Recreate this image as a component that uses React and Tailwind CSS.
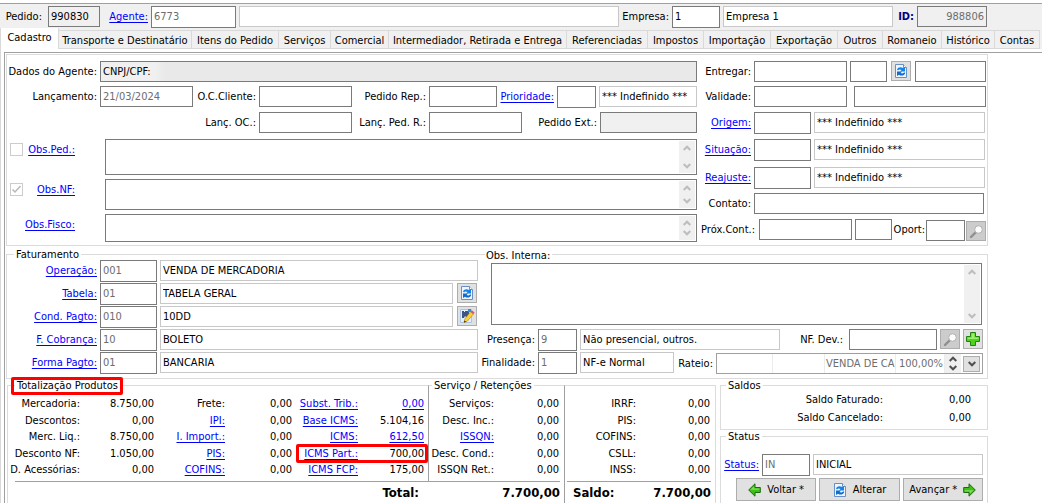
import { useId } from "react";

const tabs = [
    { label: "Cadastro", width: "w-[59px]" },
    { label: "Transporte e Destinatário", width: "w-[133px]" },
    { label: "Itens do Pedido", width: "w-[87px]" },
    { label: "Serviços", width: "w-[52px]" },
    { label: "Comercial", width: "w-[58px]" },
    { label: "Intermediador, Retirada e Entrega", width: "w-[178px]" },
    { label: "Referenciadas", width: "w-[81px]" },
    { label: "Impostos", width: "w-[56px]" },
    { label: "Importação", width: "w-[67px]" },
    { label: "Exportação", width: "w-[67px]" },
    { label: "Outros", width: "w-[45px]" },
    { label: "Romaneio", width: "w-[59px]" },
    { label: "Histórico", width: "w-[53px]" },
    { label: "Contas", width: "w-[45px]" },
];

const produtos = [
    [
        { label: "Mercadoria:", value: "8.750,00" },
        { label: "Descontos:", value: "0,00" },
        { label: "Merc. Liq.:", value: "8.750,00" },
        { label: "Desconto NF:", value: "1.050,00" },
        { label: "D. Acessórias:", value: "0,00" },
    ],
    [
        { label: "Frete:", value: "0,00" },
        { label: "IPI:", value: "0,00", link: true },
        { label: "I. Import.:", value: "0,00", link: true },
        { label: "PIS:", value: "0,00", link: true },
        { label: "COFINS:", value: "0,00", link: true },
    ],
    [
        { label: "Subst. Trib.:", value: "0,00", link: true, valueLink: true },
        { label: "Base ICMS:", value: "5.104,16", link: true },
        { label: "ICMS:", value: "612,50", link: true, valueLink: true },
        { label: "ICMS Part.:", value: "700,00", link: true, marked: true },
        { label: "ICMS FCP:", value: "175,00", link: true },
    ],
];

const servicos = [
    { label: "Serviços:", value: "0,00" },
    { label: "Desc. Inc.:", value: "0,00" },
    { label: "ISSQN:", value: "0,00", link: true },
    { label: "Desc. Cond.:", value: "0,00" },
    { label: "ISSQN Ret.:", value: "0,00" },
];

const retencoes = [
    { label: "IRRF:", value: "0,00" },
    { label: "PIS:", value: "0,00" },
    { label: "COFINS:", value: "0,00" },
    { label: "CSLL:", value: "0,00" },
    { label: "INSS:", value: "0,00" },
];

const faturamento = [
    { label: "Operação:", code: "001", name: "VENDA DE MERCADORIA" },
    { label: "Tabela:", code: "01", name: "TABELA GERAL", icon: "refresh" },
    { label: "Cond. Pagto:", code: "010", name: "10DD", icon: "edit" },
    { label: "F. Cobrança:", code: "10", name: "BOLETO" },
    { label: "Forma Pagto:", code: "01", name: "BANCARIA" },
];

/* ---------- Iconos ---------- */

const RefreshIcon = () => (
    <svg width="14" height="16" viewBox="0 0 14 16" aria-hidden="true">
        <path d="M1.5 1.5h8l3 3v10h-11z" fill="#eef5fd" stroke="#6a8fc4" />
        <path d="M9.5 1.5v3h3" fill="#fff" stroke="#6a8fc4" />
        <path d="M3 6.500C4 4 7 3.500 9 5l2-1v4.500H6l1.600-1.500C6.200 6.200 4.800 6.300 4 7.500z" fill="#1583e6" />
        <path d="M11.200 10c-1 2.800-4.200 3.300-6.200 1.700L3 13V8.500h5L6.500 10c1.400.8 2.800.6 3.700-.8z" fill="#0f6bd0" />
    </svg>
);

const EditIcon = () => (
    <svg width="16" height="16" viewBox="0 0 16 16" aria-hidden="true">
        <path d="M1.500 1.500h11v13h-11z" fill="#e3effb" stroke="#a9c6ea" />
        <path d="M3 3h2v1h1V3h4v6l-2 1-2-2-1 2H3z" fill="#3f5486" />
        <path d="M9 1h3v3H9z" fill="#3b8ad8" />
        <path d="M5 14.500l.8-3.500L11.500 3.800l2.800 2.400L8 13.500z" fill="#fbd13c" stroke="#b07a12" strokeWidth=".6" />
        <path d="M11.500 3.800l1.300-1.600 2.800 2.400-1.300 1.600z" fill="#d8558a" />
        <path d="M5 14.500l.5-2 1.500 1.300z" fill="#222" />
    </svg>
);

const SearchIcon = () => (
    <svg width="15" height="15" viewBox="0 0 15 15" aria-hidden="true">
        <path d="M2 13L6.500 8.500" stroke="#8f8f8f" strokeWidth="2.400" strokeLinecap="round" />
        <circle cx="9.500" cy="5.500" r="3.800" fill="#fcfcfc" stroke="#b0b0b0" />
    </svg>
);

const PlusIcon = () => (
    <svg width="16" height="16" viewBox="0 0 16 16" aria-hidden="true">
        <path d="M5.500 1.500h5v4h4v5h-4v4h-5v-4h-4v-5h4z" fill="#4fd321" stroke="#23820f" />
        <path d="M6.500 2.500h3v4h4v1.500h-11V6.500h4z" fill="#9cf06c" />
    </svg>
);

const ArrowIcon = ({ flip }) => (
    <svg width="13" height="14" viewBox="0 0 13 14" className={flip ? "rotate-180" : ""} aria-hidden="true">
        <path d="M.7 7L7 .8v3.700h5.300v5H7v3.700z" fill="#3fbf17" stroke="#1c6b12" />
        <path d="M2.500 6.800L6.100 3.200v2.200h5.200v1.400z" fill="#7fe055" />
    </svg>
);

const Chevron = ({ down, color = "#bdbdbd" }) => (
    <svg width="8" height="6" viewBox="0 0 8 6" className={down ? "rotate-180" : ""} aria-hidden="true">
        <path d="M.7 5L4 1.700 7.300 5" fill="none" stroke={color} strokeWidth="2" />
    </svg>
);

/* ---------- Controles ---------- */

const linkClass = "text-[#0000ff] underline underline-offset-2 decoration-1";

const Input = ({ className = "", soft, ...props }) => (
    <input
        className={`min-w-0 border px-0.5 pb-px outline-none rounded-none ${soft ? "border-[#c8c8c8]" : "border-[#7a7a7a]"} ${className}`}
        {...props}
    />
);

const Field = ({ label, link, labelWidth = "", labelClass = "", className = "", ...props }) => {
    const id = useId();

    return (
        <>
            <span className={`flex justify-end items-center shrink-0 whitespace-nowrap ${labelWidth} ${labelClass}`}>
                {link
                    ? <a href="#" id={`${id}-l`} className={linkClass}>{label}</a>
                    : <label htmlFor={id}>{label}</label>}
            </span>
            <Input id={id} aria-labelledby={link ? `${id}-l` : undefined} className={`shrink-0 ${className}`} {...props} />
        </>
    );
};

const Memo = ({ label, className = "" }) => (
    <div className={`flex border border-[#7a7a7a] p-px ${className}`}>
        <textarea aria-label={label} className="flex-1 min-w-0 resize-none overflow-hidden outline-none px-0.5" />
        <div className="w-4 bg-[#f0f0f0] flex flex-col justify-between items-center py-1">
            <Chevron />
            <Chevron down />
        </div>
    </div>
);

const IconButton = ({ title, className = "bg-[#e1e1e1]", children }) => (
    <button title={title} className={`shrink-0 w-5 h-5 flex items-center justify-center border border-[#adadad] ${className}`}>
        {children}
    </button>
);

const ActionButton = ({ children }) => (
    <button className="flex-1 h-[23px] flex items-center justify-center gap-1.5 bg-[#e1e1e1] border border-[#adadad] whitespace-nowrap">
        {children}
    </button>
);

const Legend = ({ children, className = "" }) => (
    <legend className={`h-3 leading-[14px] px-0.5 whitespace-nowrap ${className}`}>{children}</legend>
);

const Totals = ({ rows, labelWidth, className = "" }) => (
    <dl className={`flex flex-col justify-between h-[82px] leading-4 whitespace-nowrap ${className}`}>
        {rows.map(row => (
            <div key={row.label} className="relative flex h-4">
                <dt className={`flex justify-end shrink-0 ${labelWidth}`}>
                    {row.link ? <a href="#" className={linkClass}>{row.label}</a> : row.label}
                </dt>
                <dd className="flex-1 flex justify-end">
                    {row.valueLink ? <a href="#" className={linkClass}>{row.value}</a> : row.value}
                </dd>
                {row.marked && (
                    <div className="absolute -top-0.5 -bottom-px left-1 -right-1 border-3 border-[#ff0000] rounded-xs" />
                )}
            </div>
        ))}
    </dl>
);

/* ---------- Secciones ---------- */

const Header = () => (
    <div className="flex items-start gap-[3px] pt-0.5 pl-1.5 pr-[55px] border-t border-[#a0a0a0]">
        <Field label="Pedido:" labelWidth="w-9" labelClass="h-[21px] mr-[3px]" className="w-[52px] h-[21px] bg-[#f0f0f0]" defaultValue="990830" />
        <Field label="Agente:" link labelWidth="w-[45px]" labelClass="h-[22px]" className="w-[85px] h-[22px] bg-white text-[#6d6d6d]" defaultValue="6773" />
        <Input soft aria-label="Nome do agente" className="flex-1 h-[21px] bg-white" />
        <Field label="Empresa:" labelWidth="w-[47px]" labelClass="h-[22px]" className="w-12 h-[22px] bg-white" defaultValue="1" />
        <Input soft aria-label="Nome da empresa" className="w-[170px] h-[21px] bg-white" defaultValue="Empresa 1" />
        <Field label="ID:" labelWidth="w-[18px]" labelClass="h-[22px] font-bold text-[#000080]" className="w-[70px] h-[21px] bg-[#f0f0f0] text-right text-[#6d6d6d]" defaultValue="988806" />
    </div>
);

const Cadastro = () => (
    <div className="flex border border-[#dcdcdc] pt-1.5 pb-[3px]">
        <div className="flex-1 min-w-0">
            <div className="flex gap-[3px]">
                <Field
                    label="Dados do Agente:"
                    labelWidth="w-[90px]"
                    className="flex-1 h-[21px] bg-[linear-gradient(90deg,#f0f0f0_54px,#e9e9e9_64px)]"
                    defaultValue="CNPJ/CPF:"
                />
            </div>
            <div className="flex items-start gap-[3px] mt-1">
                <Field label="Lançamento:" labelWidth="w-[90px]" labelClass="h-[22px]" className="w-[93px] h-[21px] text-[#6d6d6d]" defaultValue="21/03/2024" />
                <Field label="O.C.Cliente:" labelWidth="w-[60px]" labelClass="h-[21px]" className="w-[93px] h-[21px]" />
                <Field label="Pedido Rep.:" labelWidth="w-[71px]" labelClass="h-[21px]" className="w-[68px] h-[21px]" />
                <Field label="Prioridade:" link labelWidth="w-[54px]" labelClass="h-[22px]" className="w-[39px] h-[22px]" />
                <Input soft aria-label="Descrição da prioridade" className="flex-1 h-[21px]" defaultValue="*** Indefinido ***" />
            </div>
            <div className="flex gap-[3px] mt-1">
                <Field label="Lanç. OC.:" labelWidth="w-[249px]" className="w-[93px] h-[21px]" />
                <Field label="Lanç. Ped. R.:" labelWidth="w-[71px]" className="w-[93px] h-[21px]" />
                <Field label="Pedido Ext.:" labelWidth="w-[72px]" className="flex-1 h-[21px] bg-[#f0f0f0]" />
            </div>

            <div className="flex items-start gap-[3px] mt-1.5 pl-[3px]">
                <input type="checkbox" aria-label="Obs.Ped." className="appearance-none shrink-0 size-[13px] mt-1 border border-[#cccccc]" />
                <a href="#" className={`w-[49px] leading-[22px] mr-[27px] text-right whitespace-nowrap ${linkClass}`}>Obs.Ped.:</a>
                <Memo label="Obs.Ped." className="flex-1 h-9" />
            </div>
            <div className="flex items-start gap-[3px] mt-1 pl-[3px]">
                <span className="relative shrink-0 size-[13px] mt-1">
                    <input type="checkbox" aria-label="Obs.NF" defaultChecked className="appearance-none block size-[13px] border border-[#cccccc]" />
                    <svg width="13" height="13" viewBox="0 0 13 13" className="absolute inset-0 pointer-events-none" aria-hidden="true">
                        <path d="M2.500 6.500l2.500 2.500 5.500-6" fill="none" stroke="#b8b8b8" strokeWidth="1.500" />
                    </svg>
                </span>
                <a href="#" className={`w-[49px] leading-[22px] mr-[27px] text-right whitespace-nowrap ${linkClass}`}>Obs.NF:</a>
                <Memo label="Obs.NF" className="flex-1 h-[31px]" />
            </div>
            <div className="flex items-start gap-[3px] mt-1 pl-[3px]">
                <a href="#" className={`w-[65px] leading-[22px] mr-[27px] text-right whitespace-nowrap ${linkClass}`}>Obs.Fisco:</a>
                <Memo label="Obs.Fisco" className="flex-1 h-7" />
            </div>
        </div>

        <div className="w-[290px]">
            <div className="flex gap-[3px] pr-px">
                <Field label="Entregar:" labelWidth="w-[54px]" className="w-[93px] h-[21px]" />
                <Input aria-label="Hora da entrega" className="w-[37px] h-[21px]" />
                <span className="mx-px"><IconButton title="Atualizar entrega"><RefreshIcon /></IconButton></span>
                <Input aria-label="Período da entrega" className="flex-1 h-[21px]" />
            </div>
            <div className="flex gap-[3px] pr-px mt-1">
                <Field label="Validade:" labelWidth="w-[54px]" className="w-[93px] h-[21px]" />
                <Input aria-label="Descrição da validade" className="flex-1 h-[21px] ml-1" />
            </div>
            <div className="flex items-start gap-[3px] pr-0.5 mt-[5px]">
                <Field label="Origem:" link labelWidth="w-[54px]" labelClass="h-[22px]" className="w-[57px] h-[22px]" />
                <Input soft aria-label="Descrição da origem" className="flex-1 h-[21px]" defaultValue="*** Indefinido ***" />
            </div>
            <div className="flex items-start gap-[3px] pr-0.5 mt-[5px]">
                <Field label="Situação:" link labelWidth="w-[54px]" labelClass="h-[22px]" className="w-[57px] h-[22px]" />
                <Input soft aria-label="Descrição da situação" className="flex-1 h-[21px]" defaultValue="*** Indefinido ***" />
            </div>
            <div className="flex items-start gap-[3px] pr-0.5 mt-1.5">
                <Field label="Reajuste:" link labelWidth="w-[54px]" labelClass="h-[22px]" className="w-[57px] h-[22px]" />
                <Input soft aria-label="Descrição do reajuste" className="flex-1 h-[21px]" defaultValue="*** Indefinido ***" />
            </div>
            <div className="flex gap-[3px] pr-[3px] mt-1">
                <Field label="Contato:" labelWidth="w-[54px]" className="flex-1 h-[21px]" />
            </div>
            <div className="flex items-end gap-px pr-px mt-[5px]">
                <Field label="Próx.Cont.:" labelWidth="w-[58px]" labelClass="h-[22px] mr-[3px]" className="w-[93px] h-[21px] mb-px" />
                <Input aria-label="Hora do próximo contato" className="w-[37px] h-[21px] ml-0.5 mb-px" />
                <Field label="Oport:" labelWidth="w-8" labelClass="h-[22px]" className="w-[39px] h-[21px]" />
                <IconButton title="Buscar oportunidade" className="bg-[#cccccc]"><SearchIcon /></IconButton>
            </div>
        </div>
    </div>
);

const Faturamento = () => (
    <fieldset className="relative mt-0.5 border border-[#dcdcdc]">
        <Legend className="ml-[7px]">Faturamento</Legend>
        <div className="flex pb-0.5">
            <div className="flex-1 min-w-0 flex flex-col gap-px">
                {faturamento.map(item => (
                    <div key={item.label} className="flex items-start gap-[3px]">
                        <Field label={item.label} link labelWidth="w-[90px]" labelClass="h-[22px]" className="w-[57px] h-[22px] text-[#6d6d6d]" defaultValue={item.code} />
                        <Input soft aria-label={`Descrição ${item.label}`} className="flex-1 h-[21px]" defaultValue={item.name} />
                        {item.icon && (
                            <span className="ml-px mr-px">
                                <IconButton title={item.label}>
                                    {item.icon === "refresh" ? <RefreshIcon /> : <EditIcon />}
                                </IconButton>
                            </span>
                        )}
                    </div>
                ))}
            </div>

            <div className="w-[509px] pl-[3px]">
                <span className="absolute top-0 -mt-[11px] ml-1 bg-white pl-px pr-0.5 leading-[14px]">Obs. Interna:</span>
                <Memo label="Obs. Interna" className="h-[62px] mt-[3px] ml-2.5 mr-[5px]" />
                <div className="flex items-start gap-[3px] mt-1 pr-1">
                    <Field label="Presença:" labelWidth="w-[54px]" labelClass="h-[22px]" className="w-[39px] h-[22px] text-[#6d6d6d]" defaultValue="9" />
                    <Input soft aria-label="Descrição da presença" className="w-[200px] h-[21px]" defaultValue="Não presencial, outros." />
                    <Field label="NF. Dev.:" labelWidth="w-[60px]" labelClass="h-[21px] mr-[3px]" className="flex-1 h-[21px]" />
                    <IconButton title="Buscar NF" className="bg-[#cccccc]"><SearchIcon /></IconButton>
                    <IconButton title="Adicionar NF"><PlusIcon /></IconButton>
                </div>
                <div className="flex items-start gap-[3px] mt-px pr-1">
                    <Field label="Finalidade:" labelWidth="w-[54px]" labelClass="h-[22px]" className="w-[39px] h-[22px] text-[#6d6d6d]" defaultValue="1" />
                    <Input soft aria-label="Descrição da finalidade" className="w-[94px] h-[21px]" defaultValue="NF-e Normal" />
                    <span className="w-9 h-6 flex items-center justify-end whitespace-nowrap">Rateio:</span>
                    <div className="flex-1 h-[21px] mt-px flex items-center border border-[#a0a0a0] text-[#6d6d6d] leading-[19px] whitespace-nowrap">
                        <span className="flex-1 h-full border-r border-[#ececec]" />
                        <span className="w-[52px] h-full border-r border-[#ececec]" />
                        <span className="shrink-0 w-[71px] h-full border-r border-[#ececec] pl-px">VENDA DE CA</span>
                        <span className="shrink-0 w-[49px] h-full border-r border-[#ececec] text-right pr-px">100,00%</span>
                        <span className="w-4 h-full bg-[#f0f0f0] flex flex-col justify-around items-center">
                            <Chevron color="#505050" />
                            <Chevron down color="#505050" />
                        </span>
                        <button title="Abrir rateio" className="w-[17px] h-4 mx-0.5 flex items-center justify-center bg-[#e1e1e1] border border-[#adadad]">
                            <Chevron down color="#505050" />
                        </button>
                    </div>
                </div>
            </div>
        </div>
    </fieldset>
);

const Totalizacao = () => (
    <div className="flex-1 flex ml-px">
        <div className="flex-1 min-w-0 flex flex-col">
            <div className="flex">
                <fieldset className="flex-1 min-w-0 border-t border-l border-[#dcdcdc]">
                    <Legend className="relative ml-[7px]">
                        Totalização Produtos
                        <span className="absolute -left-1 -right-[3px] -top-0.5 -bottom-1 border-3 border-[#ff0000] rounded-xs" />
                    </Legend>
                    <div className="flex pt-[5px] pb-[3px] pr-1">
                        <Totals rows={produtos[0]} labelWidth="w-[72px]" className="flex-1" />
                        <Totals rows={produtos[1]} labelWidth="w-[71px]" className="w-[138px]" />
                        <Totals rows={produtos[2]} labelWidth="w-[66px]" className="w-[132px]" />
                    </div>
                </fieldset>
                <fieldset className="w-[136px] border-t border-[#dcdcdc] border-l border-l-[#a0a0a0]">
                    <Legend className="ml-[3px]">Serviço / Retenções</Legend>
                    <Totals rows={servicos} labelWidth="w-[65px]" className="mt-[5px] mr-[5px]" />
                </fieldset>
            </div>
            <div className="flex-1 flex border-l border-[#dcdcdc] pl-[7px] pr-1">
                <div className="flex-1 flex justify-end border-t border-[#a0a0a0] text-[13px] font-bold leading-[22px]">
                    <span>Total:</span>
                    <span className="w-[141px] text-right">7.700,00</span>
                </div>
            </div>
        </div>
        <div className="w-[152px] mt-1.5 flex flex-col border-t border-x border-[#dcdcdc] border-l-[#a0a0a0]">
            <Totals rows={retencoes} labelWidth="w-[71px]" className="mt-2.5 mb-[3px] mr-[5px]" />
            <div className="ml-0.5 mr-1 pl-1.5 flex justify-between border-t border-[#a0a0a0] text-[13px] font-bold leading-[22px]">
                <span>Saldo:</span>
                <span>7.700,00</span>
            </div>
        </div>
    </div>
);

const Situacao = () => (
    <div className="w-[268px] ml-1 flex flex-col">
        <fieldset className="border border-[#dcdcdc]">
            <Legend className="ml-[5px]">Saldos</Legend>
            <dl className="flex flex-col gap-0.5 pt-px pb-[3px] pr-4 leading-4">
                <div className="flex justify-end">
                    <dt>Saldo Faturado:</dt>
                    <dd className="w-[88px] text-right">0,00</dd>
                </div>
                <div className="flex justify-end">
                    <dt>Saldo Cancelado:</dt>
                    <dd className="w-[88px] text-right">0,00</dd>
                </div>
            </dl>
        </fieldset>
        <fieldset className="flex-1 border border-b-0 border-[#dcdcdc]">
            <Legend className="ml-[5px]">Status</Legend>
            <div className="flex items-start gap-[3px] pt-3 pl-0.5 pr-1">
                <Field label="Status:" link labelWidth="w-9" labelClass="h-[22px]" className="w-12 h-[22px] text-[#6d6d6d]" defaultValue="IN" />
                <Input soft aria-label="Descrição do status" className="flex-1 h-[21px]" defaultValue="INICIAL" />
            </div>
            <div className="flex gap-[3px] mt-0.5 pl-[15px] pr-1">
                <ActionButton><ArrowIcon /> Voltar *</ActionButton>
                <ActionButton><RefreshIcon /> Alterar</ActionButton>
                <ActionButton>Avançar * <ArrowIcon flip /></ActionButton>
            </div>
        </fieldset>
    </div>
);

export default function App() {
    return (
        <div className="min-h-screen flex flex-col bg-white text-black text-[11px] leading-[14px] font-['DejaVu_Sans_Condensed','DejaVu_Sans',sans-serif]">
            <div className="bg-[#f0f0f0] border-t-3 border-white">
                <Header />
                <nav className="flex items-end" role="tablist">
                    {tabs.map((tab, i) => (
                        <button
                            key={tab.label}
                            role="tab"
                            aria-selected={i === 0}
                            className={`${tab.width} whitespace-nowrap flex items-center justify-center border-r border-[#d9d9d9] ${i === 0 ? "h-[21px] pb-0.5 bg-white border-l" : "h-[19px] pt-0.5 border-y"}`}
                        >
                            {tab.label}
                        </button>
                    ))}
                </nav>
            </div>

            <div className="flex-1 flex flex-col border-l border-[#d9d9d9] pt-[3px] pl-[3px]">
                <div className="flex-1 flex flex-col border-t border-l border-[#a0a0a0] pt-px pl-px pr-[54px]">
                    <Cadastro />
                    <Faturamento />
                    <div className="flex-1 flex">
                        <Totalizacao />
                        <Situacao />
                    </div>
                </div>
            </div>
        </div>
    );
}
